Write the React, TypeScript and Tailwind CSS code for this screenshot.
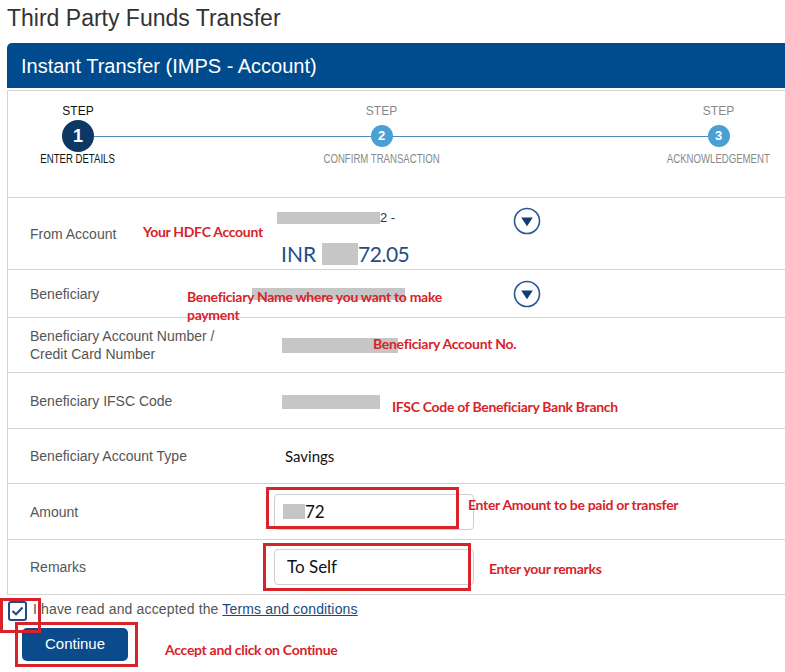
import React from "react";

const Dropdown = () => (
  <svg width="28" height="28" viewBox="0 0 28 28">
    <circle cx="14" cy="14" r="12.5" fill="#fff" stroke="#2a5a92" strokeWidth="1.6" />
    <path d="M8.2 10.6 L19.8 10.6 L14 19.2 Z" fill="#0e3e74" />
  </svg>
);

const Anno = ({ cls, children }: { cls: string; children: React.ReactNode }) => (
  <div className={`absolute font-['Lato',sans-serif] font-bold text-[14px] tracking-[-0.3px] leading-[18px] text-[#d8232a] whitespace-nowrap ${cls}`}>
    {children}
  </div>
);

const RedBox = ({ cls }: { cls: string }) => (
  <div className={`absolute border-[3px] border-[#d8232a] ${cls}`} />
);

const Step = ({
  n,
  label,
  active,
  cls,
}: {
  n: string;
  label: string;
  active?: boolean;
  cls: string;
}) => (
  <div className={`flex flex-col items-center ${cls}`}>
    <div className={`text-[12px] leading-[14px] ${active ? "text-[#111]" : "text-[#888]"}`}>STEP</div>
    <div className="mt-[2px] h-[32px] flex items-center justify-center">
      {active ? (
        <div className="relative w-[32px] h-[32px] rounded-full bg-[#0d3866] flex items-center justify-center text-white font-bold text-[18px]">
          {n}
        </div>
      ) : (
        <div className="relative w-[22px] h-[22px] rounded-full bg-[#4a9fd5] flex items-center justify-center text-white font-bold text-[13px]">
          {n}
        </div>
      )}
    </div>
    <div
      className={`mt-[1px] text-[12px] leading-[13px] whitespace-nowrap scale-x-[0.8] ${
        active ? "text-[#111]" : "text-[#888]"
      }`}
    >
      {label}
    </div>
  </div>
);

export default function App() {
  const label = "w-[266px] shrink-0 pl-[22px] text-[14px] leading-[18px] text-[#555]";
  return (
    <div className="relative w-[785px] h-[672px] overflow-hidden bg-white font-['Liberation_Sans',Arial,sans-serif]">
      <div className="h-[43px] pl-[7px] pt-[7px]">
        <h1 className="text-[23px] leading-[23px] text-[#333] font-normal">Third Party Funds Transfer</h1>
      </div>

      <div className="ml-[7px] w-[800px] h-[45px] bg-[#004b8d] rounded-tl-[5px] flex items-center pl-[14px]">
        <span className="text-white text-[20px] leading-[24px]">Instant Transfer (IMPS - Account)</span>
      </div>

      <div className="ml-[7px] mt-[2px] w-[800px] border-l border-t border-[#d3d3d3]">
        {/* steps */}
        <div className="relative h-[107px] border-b border-[#d3d3d3] flex pt-[13px]">
          <div className="absolute left-[86px] top-[45px] w-[620px] h-px bg-[#4f8bb8]" />
          <Step n="1" label="ENTER DETAILS" active cls="ml-[32px] w-[76px]" />
          <Step n="2" label="CONFIRM TRANSACTION" cls="ml-[205px] w-[121px]" />
          <Step n="3" label="ACKNOWLEDGEMENT" cls="ml-[223px] w-[107px]" />
        </div>

        {/* From account */}
        <div className="flex items-center h-[72px] border-b border-[#d3d3d3]">
          <div className={label}>From Account</div>
          <div className="w-[239px] self-start pt-[14px]">
            <div className="flex items-center h-[12px]">
              <div className="ml-[3px] w-[103px] h-[12px] bg-[#c6c6c6]" />
              <span className="text-[13px] leading-[12px] text-[#333]">2 -</span>
            </div>
            <div className="mt-[18px] flex items-center h-[24px] font-['Lato',sans-serif] text-[21px] leading-[24px] text-[#1f4f86]">
              <span className="ml-[7px]">INR</span>
              <div className="ml-[6px] w-[36px] h-[22px] bg-[#c6c6c6]" />
              <span className="tracking-[-0.5px]">72.05</span>
            </div>
          </div>
          <div className="self-start pt-[9px]">
            <Dropdown />
          </div>
        </div>

        {/* Beneficiary */}
        <div className="flex items-center h-[48px] border-b border-[#d3d3d3]">
          <div className={label}>Beneficiary</div>
          <div className="w-[239px]">
            <div className="-ml-[22px] w-[153px] h-[12px] bg-[#c6c6c6]" />
          </div>
          <Dropdown />
        </div>

        {/* Account number */}
        <div className="flex items-center h-[55px] border-b border-[#d3d3d3]">
          <div className={label}>
            Beneficiary Account Number /<br />Credit Card Number
          </div>
          <div className="ml-[8px] w-[116px] h-[15px] bg-[#c6c6c6]" />
        </div>

        {/* IFSC */}
        <div className="flex items-center h-[56px] border-b border-[#d3d3d3]">
          <div className={label}>Beneficiary IFSC Code</div>
          <div className="ml-[8px] mt-[2px] w-[98px] h-[14px] bg-[#c6c6c6]" />
        </div>

        {/* Account type */}
        <div className="flex items-center h-[55px] border-b border-[#d3d3d3]">
          <div className={label}>Beneficiary Account Type</div>
          <span className="ml-[11px] font-['Lato',sans-serif] text-[15px] text-[#111]">Savings</span>
        </div>

        {/* Amount */}
        <div className="flex items-center h-[56px] border-b border-[#d3d3d3]">
          <div className={label}>Amount</div>
          <div className="w-[200px] h-[36px] border border-[#cfcfcf] rounded-[4px] flex items-center pl-[8px]">
            <div className="w-[22px] h-[15px] bg-[#c6c6c6]" />
            <span className="font-['Lato',sans-serif] text-[17px] text-[#111]">72</span>
          </div>
        </div>

        {/* Remarks */}
        <div className="flex items-center h-[55px] border-b border-[#d3d3d3]">
          <div className={label}>Remarks</div>
          <div className="w-[200px] h-[36px] border border-[#cfcfcf] rounded-[4px] flex items-center pl-[12px]">
            <span className="font-['Lato',sans-serif] text-[17px] text-[#111]">To Self</span>
          </div>
        </div>
      </div>

      <div className="mt-[6px] ml-[8px] flex items-start">
        <div className="w-[19px] h-[20px] border-2 border-[#1e4d85] rounded-[3px] flex items-center justify-center bg-white">
          <svg width="13" height="10" viewBox="0 0 13 10">
            <path d="M1.5 5 L5 8.2 L11.5 1.5" fill="none" stroke="#1e4d85" strokeWidth="2.2" />
          </svg>
        </div>
        <div className="ml-[6px] text-[14px] tracking-[0.15px] leading-[16px] text-[#555]">
          I have read and accepted the{" "}
          <span className="text-[#1b4a7e] underline">Terms and conditions</span>
        </div>
      </div>

      <div className="mt-[7px] ml-[22px] w-[106px] h-[33px] rounded-[5px] bg-[#0b4a8b] flex items-center justify-center text-white text-[15px]">
        Continue
      </div>

      {/* annotation overlays */}
      <Anno cls="left-[143px] top-[223px]">Your HDFC Account</Anno>
      <Anno cls="left-[187px] top-[288px]">
        Beneficiary Name where you want to make
        <br />
        payment
      </Anno>
      <Anno cls="left-[373px] top-[335px]">Beneficiary Account No.</Anno>
      <Anno cls="left-[392px] top-[398px]">IFSC Code of Beneficiary Bank Branch</Anno>
      <Anno cls="left-[468px] top-[496px]">Enter Amount to be paid or transfer</Anno>
      <Anno cls="left-[489px] top-[560px]">Enter your remarks</Anno>
      <Anno cls="left-[165px] top-[641px]">Accept and click on Continue</Anno>

      <RedBox cls="left-[266px] top-[487px] w-[193px] h-[42px]" />
      <RedBox cls="left-[263px] top-[543px] w-[208px] h-[48px]" />
      <RedBox cls="left-[0px] top-[598px] w-[41px] h-[35px]" />
      <RedBox cls="left-[15px] top-[622px] w-[123px] h-[45px]" />
    </div>
  );
}
